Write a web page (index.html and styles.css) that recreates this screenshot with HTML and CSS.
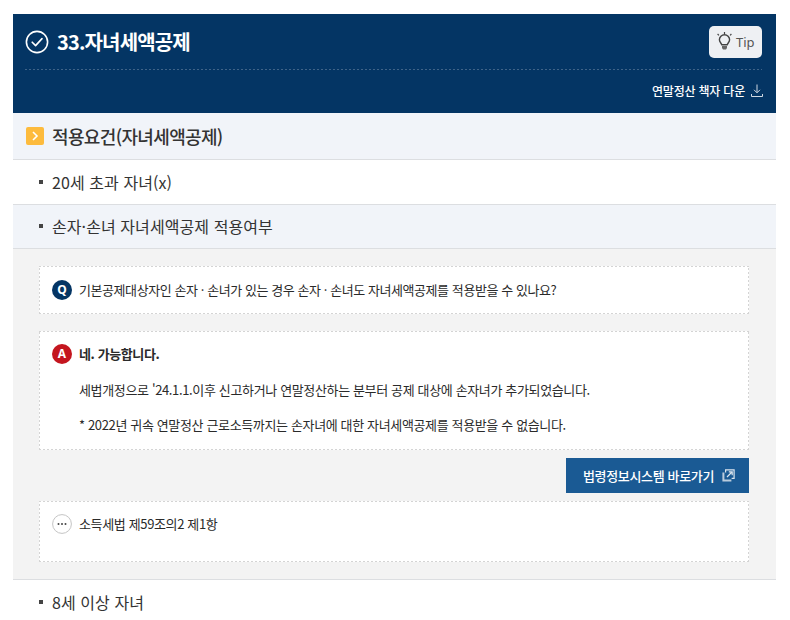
FILE: index.html
```html
<!DOCTYPE html>
<html lang="ko">
<head>
<meta charset="utf-8">
<title>33.자녀세액공제</title>
<link rel="stylesheet" href="styles.css">
</head>
<body>
<main class="page">
  <header class="hero">
    <div class="hero-top">
      <svg class="check" width="24" height="24" viewBox="0 0 24 24" fill="none" stroke="#fff" stroke-width="1.6"><circle cx="12" cy="12" r="10.6"/><path d="M7.2 12.2l3.4 3.4 6.4-7" stroke-linecap="round" stroke-linejoin="round"/></svg>
      <h1 class="hero-title">33.자녀세액공제</h1>
      <button class="tip">
        <svg width="17" height="20" viewBox="0 0 17 20" fill="none" stroke="#444" stroke-width="1.4"><path d="M5.8 12.8c-.3-1.6-2.4-2.6-2.4-5a5.1 5.1 0 0 1 10.2 0c0 2.4-2.1 3.4-2.4 5z"/><path d="M6 14h5v2l-1 1.6H7L6 16z" fill="#666" stroke="none"/><path d="M8.5 0v2M1.6 2l1.3 1.3M15.4 2l-1.3 1.3" stroke-width="1.2"/></svg>
        <span>Tip</span>
      </button>
    </div>
    <div class="hero-bottom">
      <span>연말정산 책자 다운</span>
      <svg class="down" width="12" height="13" viewBox="0 0 12 13" fill="none" stroke="#cfd8e2" stroke-width="1"><path d="M6 0.5v8M3 5.8l3 3 3-3M0.5 10v2.5h11V10"/></svg>
    </div>
  </header>

  <section class="req">
    <span class="chev"><svg width="8" height="10" viewBox="0 0 8 10" fill="none" stroke="#fff" stroke-width="1.6"><path d="M2 1l4 4-4 4"/></svg></span>
    <h2 class="req-title">적용요건(자녀세액공제)</h2>
  </section>

  <div class="item">20세 초과 자녀(x)</div>
  <div class="item item-open">손자·손녀 자녀세액공제 적용여부</div>

  <section class="panel">
    <div class="box box-q">
      <span class="badge badge-q">Q</span>
      <p class="line line-q">기본공제대상자인 손자 · 손녀가 있는 경우 손자 · 손녀도 자녀세액공제를 적용받을 수 있나요?</p>
    </div>
    <div class="box box-a">
      <div class="a-head">
        <span class="badge badge-a">A</span>
        <strong class="line strong">네. 가능합니다.</strong>
      </div>
      <p class="line a-text">세법개정으로 '24.1.1.이후 신고하거나 연말정산하는 분부터 공제 대상에 손자녀가 추가되었습니다.</p>
      <p class="line a-text a-last">* 2022년 귀속 연말정산 근로소득까지는 손자녀에 대한 자녀세액공제를 적용받을 수 없습니다.</p>
    </div>
    <div class="actions">
      <a class="law-btn">
        <span>법령정보시스템 바로가기</span>
        <svg width="13" height="13" viewBox="0 0 13 13" fill="none" stroke="#dbe5ee" stroke-width="1.2"><path d="M3.6 3.5V.9h8.5v8.5H9.6"/><path d="M1.4 3.6v8h8" stroke="#b9cbdc" stroke-width="2"/><path d="M5 8l5-5M6.8 2.8h3.4v3.4"/></svg>
      </a>
    </div>
    <div class="box box-c">
      <svg class="dots" width="20" height="20" viewBox="0 0 20 20"><circle cx="10" cy="10" r="9.4" fill="#fff" stroke="#c4c4c4"/><circle cx="6.5" cy="10" r="1" fill="#444"/><circle cx="10" cy="10" r="1" fill="#444"/><circle cx="13.5" cy="10" r="1" fill="#444"/></svg>
      <p class="line">소득세법 제59조의2 제1항</p>
    </div>
  </section>

  <div class="item item-last">8세 이상 자녀</div>
</main>
</body>
</html>
```

FILE: styles.css
```css
* { box-sizing: border-box; }
html, body { margin: 0; padding: 0; height: 620px; overflow: hidden; background: #fff; }
body { font-family: "Noto Sans CJK KR", "Noto Sans", sans-serif; color: #333; }
h1, h2, p { margin: 0; }
.page { width: 763px; margin: 14px 0 0 13px; }

.hero { height: 99px; background: #043564; padding: 0 14px 0 12px; color: #fff; }
.hero-top { height: 56px; display: flex; align-items: center; gap: 8px; background: repeating-linear-gradient(90deg, #3f6388 0 2px, transparent 2px 4px) left bottom / 100% 1px no-repeat; }
.check { flex: none; }
.hero-title { font-size: 20px; font-weight: 700; letter-spacing: -0.85px; flex: 1; line-height: 28px; }
.tip { width: 53px; height: 32px; margin: 0; padding: 0 0 0 7px; border: 0; border-radius: 5px; background: #eef0f3; display: flex; align-items: center; gap: 3px; color: #555; font: 400 13px "Noto Sans", sans-serif; }
.hero-bottom { height: 43px; display: flex; align-items: center; justify-content: flex-end; gap: 6px; font-size: 12px; font-weight: 500; letter-spacing: -0.2px; padding-bottom: 2px; }
.down { margin-right: -1px; }

.req { height: 47px; background: #f1f4f9; border-bottom: 1px solid #dcdee1; display: flex; align-items: center; padding-left: 13px; gap: 8px; }
.chev { width: 18px; height: 18px; border-radius: 2px; background: #fdbb3d; display: flex; align-items: center; justify-content: center; }
.req-title { font-size: 18px; font-weight: 500; letter-spacing: -0.65px; color: #333; line-height: 24px; }

.item { height: 45px; padding: 0 0 1px 26px; display: flex; align-items: center; font-size: 16px; letter-spacing: 0.08px; color: #333; border-bottom: 1px solid #dcdee1; }
.item::before { content: ""; width: 4px; height: 4px; margin-right: 9px; background: #444; }
.item-open { height: 44px; background: #f1f4f9; }
.item-last { border-bottom: 0; }

.panel { height: 331px; background: #f3f3f3; border-bottom: 1px solid #dcdee1; padding: 17px 27px 0 26px; }
.box {
  background-color: #fff;
  background-image:
    repeating-linear-gradient(90deg, #d4d4d4 0 2px, transparent 2px 4px),
    repeating-linear-gradient(90deg, #d4d4d4 0 2px, transparent 2px 4px),
    repeating-linear-gradient(0deg, #d4d4d4 0 2px, transparent 2px 4px),
    repeating-linear-gradient(0deg, #d4d4d4 0 2px, transparent 2px 4px);
  background-position: left top, left bottom, left top, right top;
  background-size: 100% 1px, 100% 1px, 1px 100%, 1px 100%;
  background-repeat: no-repeat;
}
.box-q { height: 48px; display: flex; align-items: center; padding-left: 13px; gap: 7px; margin-bottom: 17px; }
.box-a { height: 119px; padding: 13px 13px 0; }
.box-c { height: 61px; display: flex; align-items: flex-start; padding: 13px 0 0 13px; gap: 7px; }
.line { font-size: 13px; letter-spacing: -0.36px; line-height: 20px; color: #2a2a2a; }
.line-q { letter-spacing: -0.43px; }
.strong { font-weight: 700; letter-spacing: -0.4px; }
.badge { flex: none; width: 20px; height: 20px; border-radius: 50%; color: #fff; font: 700 12px/20px "Noto Sans", sans-serif; text-align: center; }
.badge-q { background: #043564; }
.badge-a { background: #c4161f; }
.a-head { display: flex; align-items: center; gap: 7px; height: 20px; }
.a-text { padding-left: 27px; margin-top: 16px; }
.a-last { margin-top: 15px; }
.actions { display: flex; justify-content: flex-end; margin: 8px 0; }
.law-btn { width: 183px; height: 35px; background: #1a5a94; color: #fff; display: flex; align-items: center; gap: 8px; padding-left: 17px; font-size: 13px; font-weight: 500; letter-spacing: -0.35px; }
.dots { flex: none; }
```
